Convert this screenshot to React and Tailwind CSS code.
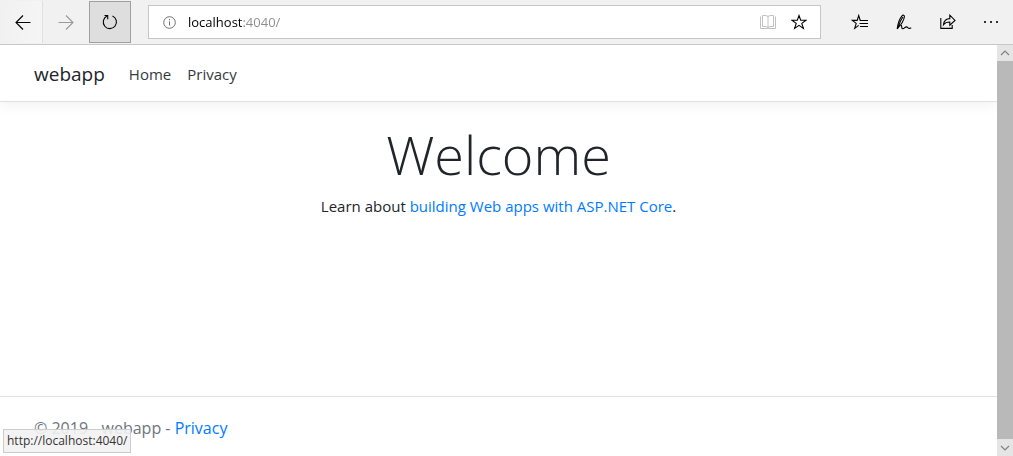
function Icon({ children, className = "", width = 16, height = 16, strokeWidth = 1 }) {
  return (
    <svg
      aria-hidden="true"
      width={width}
      height={height}
      viewBox={`0 0 ${width} ${height}`}
      fill="none"
      stroke="currentColor"
      strokeWidth={strokeWidth}
      className={`shrink-0 ${className}`}
    >
      {children}
    </svg>
  );
}

function ToolButton({ label, className = "", disabled = false, children }) {
  return (
    <button
      type="button"
      aria-label={label}
      disabled={disabled}
      className={`flex h-[42px] shrink-0 items-center justify-center ${className}`}
    >
      {children}
    </button>
  );
}

function Toolbar() {
  return (
    <div className="flex h-[45px] shrink-0 items-center border-b border-[#c8c8c8] bg-[#f1f1f1] text-black">
      <ToolButton label="Back" className="w-[43px] border-r border-[#e0e0e0] bg-linear-to-r from-[#f1f1f1] to-[#f5f5f5]">
        <Icon width={16} height={16} strokeWidth={1.1} className="ml-[3px]">
          <path d="M15.5 8.5H1M8 1.5l-7 7 7 7" />
        </Icon>
      </ToolButton>
      <ToolButton label="Forward" disabled className="w-[46px] text-[#9a9a9a]">
        <Icon width={16} height={16} strokeWidth={1.1}>
          <path d="M.5 8.5H15M8 1.5l7 7-7 7" />
        </Icon>
      </ToolButton>
      <ToolButton label="Refresh" className="w-[42px] border border-[#a0a0a0] bg-[#dedede]">
        <Icon width={16} height={16} strokeWidth={1.1}>
          <path d="M10.5 2A6.6 6.6 0 1 1 5 2.1" />
          <path d="M2.5 1.5h3.2v3.7" />
        </Icon>
      </ToolButton>

      <div className="ml-[17px] flex h-[34px] min-w-0 grow items-center border border-[#c6c6c6] bg-white pr-[13px]">
        <Icon width={13} height={13} className="ml-[14px] text-[#707070]">
          <circle cx="6.5" cy="6.5" r="5.8" />
          <path d="M6.5 5.5v4M6.5 3v1.3" />
        </Icon>
        <input
          type="text"
          aria-label="Address"
          defaultValue="localhost:4040/"
          className="ml-3 min-w-0 grow bg-linear-to-r from-black from-[54px] to-[#8c8c8c] to-[54px] bg-clip-text font-['Open_Sans','Noto_Sans',sans-serif] text-[13px] leading-5 text-transparent outline-none"
        />
        <button type="button" aria-label="Reading view" className="text-[#c2c2c2]">
          <Icon width={18} height={16}>
            <path d="M1.5 2.5v12h15v-12M9 2.5v12M3.5 12.5v-11H7l2 1 2-1h3.5v11H11l-2 1-2-1z" />
          </Icon>
        </button>
        <button type="button" aria-label="Add to favorites" className="ml-[14px]">
          <Icon width={16} height={16} strokeWidth={1.1}>
            <path d="M8 1.5l1.7 4.8H15l-4.2 3.1 1.6 5L8 11.4l-4.4 3 1.6-5L1 6.3h5.3z" />
          </Icon>
        </button>
      </div>

      <div className="ml-[17px] flex shrink-0">
        <ToolButton label="Favorites" className="w-[43px]">
          <Icon width={18} height={16} strokeWidth={1.1}>
            <path d="M10 6.4H9.2L7.7 1.5 6.2 6.4H1.3l3.9 3-1.5 5 4-3" />
            <path d="M9 6.5h8M8.5 9.5H17M9 12.5h8" />
          </Icon>
        </ToolButton>
        <ToolButton label="Add notes" className="w-[45px]">
          <Icon width={16} height={16} strokeWidth={1.1}>
            <path d="M1.2 15C1.6 11.5 3.6 4.6 6 1.8 7 .6 8.6 1 8.4 2.8 8.1 5.8 5.2 11 2.6 13.2L1.2 15M2.6 13.2C3.4 9.4 5 5.4 7 3.2M4.6 10.8C5.6 10.6 5.6 12.4 5.8 13.6c.2 1.6 1.6 1.2 2.8.2 1.4-1.1 2.4-1.2 3.2-.2.8.9 1.8 1.2 3.4.2" />
          </Icon>
        </ToolButton>
        <ToolButton label="Share" className="w-[43px]">
          <Icon width={16} height={16} strokeWidth={1.1}>
            <path d="M.8 4v10.4h11.4V11" />
            <path d="M3.5 10.7C4 6.3 6.5 4.6 9.8 4.6V1.2L15 6.4l-5.2 4.8V8C7 8 5 8.7 3.5 10.7z" />
          </Icon>
        </ToolButton>
        <ToolButton label="Settings and more" className="w-[44px]">
          <Icon width={16} height={16}>
            <path fill="#333333" stroke="none" d="M1 7h2v2H1zM7 7h2v2H7zM13 7h2v2h-2z" />
          </Icon>
        </ToolButton>
      </div>
    </div>
  );
}

function ScrollBar() {
  return (
    <div className="flex w-4 shrink-0 flex-col bg-[#b9b9b9] text-[#808080]">
      <button type="button" aria-label="Scroll up" className="flex h-4 items-center justify-center bg-[#e5e5e5]">
        <Icon width={10} height={6} strokeWidth={1.2}>
          <path d="M1 5l4-4 4 4" />
        </Icon>
      </button>
      <div className="grow" />
      <button type="button" aria-label="Scroll down" className="flex h-[17px] items-center justify-center bg-[#e5e5e5]">
        <Icon width={10} height={6} strokeWidth={1.2}>
          <path d="M1 1l4 4 4-4" />
        </Icon>
      </button>
    </div>
  );
}

export default function App() {
  return (
    <div className="relative flex min-h-screen flex-col bg-white font-['Open_Sans','Noto_Sans',sans-serif] text-[15px] leading-6 text-[#212529]">
      <Toolbar />
      <div className="flex grow">
        <div className="flex min-w-0 grow flex-col overflow-hidden">
          <header className="border-b border-[#dee2e6] shadow-[0_4px_12px_rgba(0,0,0,0.05)]">
            <nav className="flex h-14 items-center px-[34px] pt-0.5">
              <a href="#" className="mr-6 text-[19px] leading-7">webapp</a>
              <a href="#" className="mr-4 text-[#343a40]">Home</a>
              <a href="#" className="text-[#343a40]">Privacy</a>
            </nav>
          </header>
          <main className="grow px-4 pt-5 text-center">
            <h1 className="mb-2 text-[54px] leading-[64px] font-light">Welcome</h1>
            <p>
              Learn about{" "}
              <a href="#" className="text-[#007bff]">building Web apps with ASP.NET Core</a>.
            </p>
          </main>
          <footer className="h-[60px] border-t border-[#dee2e6] px-[34px] pt-[19px] text-base text-[#6c757d]">
            © 2019 - webapp - <a href="#" className="text-[#007bff]">Privacy</a>
          </footer>
        </div>
        <ScrollBar />
      </div>
      <div role="status" className="absolute bottom-[3px] left-[3px] border border-[#cccccc] bg-[#f2f2f2]/90 px-[3px] text-[12px] leading-[22px] text-[#333333]">
        http://localhost:4040/
      </div>
    </div>
  );
}
